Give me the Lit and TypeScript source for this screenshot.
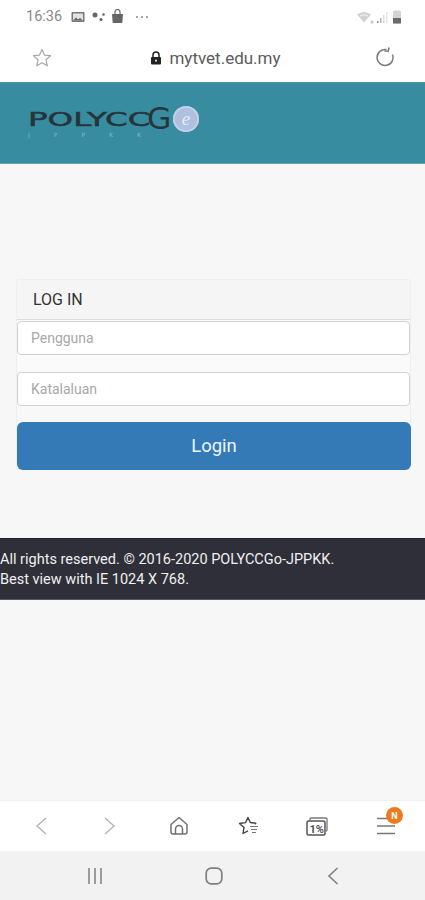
import { LitElement, html, css } from "lit";
import { customElement } from "lit/decorators.js";

@customElement("app-root")
export class AppRoot extends LitElement {
  static styles = css`
    :host { display: block; width: 425px; height: 900px; font-family: Roboto, "Liberation Sans", sans-serif; background: #f7f7f7; overflow: hidden; }
    .shell { display: flex; flex-direction: column; height: 900px; }
    svg { display: block; flex: none; }
    .status { height: 33px; background: #fff; display: flex; align-items: center; padding: 0 23px 0 26px; color: #8a8a8a; font-size: 14.5px; box-sizing: border-box; }
    .status .img { margin-left: 9px; }
    .status .nodes { margin-left: 7px; }
    .status .bag { margin-left: 6px; }
    .status .dots { margin-left: 11px; }
    .status .right { margin-left: auto; display: flex; align-items: center; gap: 2px; }
    .url { height: 49px; background: #fff; display: flex; align-items: center; justify-content: space-between; padding: 0 30px 0 32px; box-sizing: border-box; }
    .addr { display: flex; align-items: center; gap: 7px; font-size: 17px; color: #5c5c5c; margin-left: 4px; }
    .head { height: 82px; background: #388c9f; border-top: 1px solid #4a9cab; border-bottom: 1px solid #5aa7b3; box-sizing: border-box; padding: 23px 0 0 28px; display: flex; align-items: flex-start; }
    .logo { display: flex; align-items: flex-start; }
    .logo-words { display: flex; flex-direction: column; width: 144px; }
    .poly { font-family: "DejaVu Sans", sans-serif; color: #26353c; height: 26px; line-height: 26px; display: flex; align-items: center; }
    .wide { display: block; flex: none; width: 119px; font-size: 19px; white-space: nowrap; transform: scaleX(1.71); transform-origin: left center; -webkit-text-stroke: 0.5px #26353c; }
    .g { display: block; flex: none; font-size: 30px; transform: scaleX(1.05); transform-origin: left center; }
    .jppkk { font-size: 6px; line-height: 6px; color: #8fb8c2; letter-spacing: 24px; font-family: "DejaVu Sans", sans-serif; white-space: nowrap; display: flex; }
    .jppkk .last { letter-spacing: 0; }
    .badge-e { width: 26px; height: 26px; border-radius: 50%; background: #aebfe0; margin: 0 0 0 1px; display: flex; align-items: center; justify-content: center; color: #e8ecf8; font-style: italic; font-size: 19px; font-family: "Liberation Serif", serif; flex: none; box-shadow: inset 0 0 0 2px #c2cfe6; }
    .page { flex: 1; display: flex; flex-direction: column; background: #f7f7f7; padding-top: 115px; }
    .panel { margin: 0 14px 0 16px; border: 1px solid #efefef; border-radius: 3px; background: #f8f8f8; }
    .title { height: 40px; background: #f5f5f5; border-bottom: 1px solid #dcdcdc; display: flex; align-items: center; padding-left: 16px; font-size: 16px; color: #333; box-sizing: border-box; }
    .fields { display: flex; flex-direction: column; gap: 17px; padding-top: 1px; background: #fafafa; }
    .input { height: 34px; box-sizing: border-box; background: #fff; border: 1px solid #d2d2d2; border-radius: 4px; display: flex; align-items: center; padding-left: 13px; font-size: 14px; color: #a8a8a8; }
    .btn { height: 48px; margin: 16px 0 -1px 0; width: 394px; background: #337ab7; border-radius: 6px; color: #eef5f9; font-size: 18.500px; display: flex; align-items: center; justify-content: center; }
    .foot { margin-top: 68px; height: 62px; background: #2e2f38; border-top: 1px solid #1f2030; border-bottom: 1px solid #55565e; box-sizing: border-box; color: #f0f0f0; font-size: 14.500px; line-height: 20px; padding-top: 11px; }
    .toolbar { height: 51px; background: #fff; border-top: 1px solid #f0f0f0; box-sizing: border-box; display: grid; grid-template-columns: repeat(6, 1fr); padding: 0 4px 0 6px; }
    .cell { display: flex; align-items: center; justify-content: center; position: relative; }
    .n { position: absolute; top: 6px; left: 34px; width: 17px; height: 17px; border-radius: 50%; background: #ee7a1f; color: #fff; font-size: 9px; font-weight: 700; display: flex; align-items: center; justify-content: center; }
    .nav { height: 49px; background: #f2f2f2; display: grid; grid-template-columns: repeat(3, 1fr); padding: 0 33px 0 36px; box-sizing: border-box; align-items: center; justify-items: center; }
  `;

  render() {
    return html`<div class="shell">
      <div class="status">
        <span>16:36</span>
        <svg class="img" width="14" height="12" viewBox="0 0 14 12"><rect x=".5" y="1" width="13" height="10" rx="1" fill="#777"/><rect x="2" y="2.500" width="10" height="7" fill="#e2e2e2"/><path d="M2 9.500l3-3 2 2 2-1.500 3 2.500z" fill="#666"/></svg>
        <svg class="nodes" width="13" height="10" viewBox="0 0 13 10"><circle cx="3" cy="3" r="2.500" fill="#666"/><circle cx="9" cy="7.500" r="1.600" fill="#666"/><circle cx="11.500" cy="2.500" r="1.300" fill="#666"/></svg>
        <svg class="bag" width="13" height="15" viewBox="0 0 13 15"><path d="M1 5h11l-.7 9H1.700z" fill="#666"/><path d="M4 6V3a2.500 2.500 0 0 1 5 0v3" fill="none" stroke="#666" stroke-width="1.200"/></svg>
        <svg class="dots" width="14" height="4" viewBox="0 0 14 4"><circle cx="2" cy="2" r="1" fill="#888"/><circle cx="7" cy="2" r="1" fill="#888"/><circle cx="12" cy="2" r="1" fill="#888"/></svg>
        <span class="right">
          <svg width="19" height="14" viewBox="0 0 19 14"><path d="M1 4.500a11 11 0 0 1 14 0L8 12.500z" fill="#d2d2d2"/><path d="M4 6a7 7 0 0 1 8 0" fill="none" stroke="#f5f5f5"/><circle cx="16" cy="12" r="1.500" fill="#c4c4c4"/></svg>
          <svg width="12" height="14" viewBox="0 0 12 14" style="margin-left:-1px"><rect x="1" y="11" width="1.500" height="2" fill="#888"/><rect x="4" y="8" width="1.500" height="5" fill="#b4b4b4"/><rect x="7" y="5" width="1.500" height="8" fill="#ddd"/><rect x="10" y="2" width="1.500" height="11" fill="#e6e6e6"/></svg>
          <svg width="10" height="16" viewBox="0 0 10 16" style="margin-left:2px"><rect x="1" y="1.500" width="8" height="13" rx="1.500" fill="#d4d4d4"/><rect x="1" y="9" width="8" height="5.500" fill="#6a6a6a"/></svg>
        </span>
      </div>
      <div class="url">
        <svg width="20" height="20" viewBox="0 0 20 20"><path d="M10 1.500l2.500 5.600 6 .6-4.500 4.100 1.300 6L10 14.700l-5.300 3.100 1.300-6L1.500 7.700l6-.6z" fill="none" stroke="#a8a8a8" stroke-width="1.200" stroke-linejoin="round"/></svg>
        <span class="addr">
          <svg width="12" height="14" viewBox="0 0 12 14"><path d="M3 6V4a3 3 0 0 1 6 0v2" fill="none" stroke="#222" stroke-width="1.500"/><rect x="1" y="6" width="10" height="7.500" rx="1" fill="#222"/><circle cx="6" cy="9.700" r="1.100" fill="#ddd"/></svg>
          mytvet.edu.my
        </span>
        <svg width="20" height="21" viewBox="0 0 20 21"><path d="M11.500 2.600A8 8 0 1 0 17.500 7.500" fill="none" stroke="#7c7c7c" stroke-width="1.500"/><path d="M14 .5L13.300 4.300 9.500 4" fill="none" stroke="#7c7c7c" stroke-width="1.500"/></svg>
      </div>
      <div class="head">
        <div class="logo">
          <div class="logo-words">
            <div class="poly"><span class="wide">POLYCC</span><span class="g">G</span></div>
            <div class="jppkk"><span>JPPK</span><span class="last">K</span></div>
          </div>
          <div class="badge-e">e</div>
        </div>
      </div>
      <div class="page">
        <div class="panel">
          <div class="title">LOG IN</div>
          <div class="fields">
            <div class="input">Pengguna</div>
            <div class="input">Katalaluan</div>
          </div>
          <div class="btn">Login</div>
        </div>
        <div class="foot">All rights reserved. © 2016-2020 POLYCCGo-JPPKK.<br />Best view with IE 1024 X 768.</div>
      </div>
      <div class="toolbar">
        <div class="cell"><svg width="14" height="20" viewBox="0 0 14 20"><path d="M12 2L3 10l9 8" fill="none" stroke="#b4b4b4" stroke-width="1.400"/></svg></div>
        <div class="cell"><svg width="14" height="20" viewBox="0 0 14 20"><path d="M2 2l9 8-9 8" fill="none" stroke="#b4b4b4" stroke-width="1.400"/></svg></div>
        <div class="cell"><svg width="20" height="20" viewBox="0 0 20 20"><path d="M10 1.500L2 8.500V16a2 2 0 0 0 2 2h12a2 2 0 0 0 2-2V8.500z" fill="none" stroke="#707070" stroke-width="1.500" stroke-linejoin="round"/><path d="M6.500 18v-5a3.500 3.500 0 0 1 7 0v5" fill="none" stroke="#707070" stroke-width="1.500"/></svg></div>
        <div class="cell"><svg width="21" height="20" viewBox="0 0 21 20"><path d="M17 8.200l.8-.9-5.500-.8L10 1.500 7.500 6.600 1.500 7.500 6 11.600 5 17.500l5-2.600" fill="none" stroke="#444" stroke-width="1.400" stroke-linejoin="round"/><path d="M12 10.500h8M13 13.500h6M14 16.500h4" stroke="#777" stroke-width="1.200"/></svg></div>
        <div class="cell"><svg width="22" height="19" viewBox="0 0 22 19"><path d="M4 3.500V2a1 1 0 0 1 1-1h15a1 1 0 0 1 1 1v11a1 1 0 0 1-1 1" fill="none" stroke="#777" stroke-width="1.300"/><rect x="1" y="4" width="18" height="14" rx="1.500" fill="#fff" stroke="#555" stroke-width="1.500"/><text x="3.500" y="15.500" font-size="11" font-weight="700" fill="#555" font-family="Roboto, sans-serif">1%</text></svg></div>
        <div class="cell"><svg width="18" height="18" viewBox="0 0 18 18"><path d="M0 1.500h18M0 9h18M0 16.500h18" stroke="#777" stroke-width="1.500"/></svg><span class="n">N</span></div>
      </div>
      <div class="nav">
        <svg width="16" height="16" viewBox="0 0 16 16"><path d="M2 0v16M8 0v16M14 0v16" stroke="#808080" stroke-width="1.500"/></svg>
        <svg width="18" height="18" viewBox="0 0 18 18"><rect x="1.200" y="1.200" width="15.600" height="15.600" rx="5" fill="none" stroke="#808080" stroke-width="1.700"/></svg>
        <svg width="12" height="18" viewBox="0 0 12 18"><path d="M10.500 1L2 9l8.500 8" fill="none" stroke="#808080" stroke-width="1.600"/></svg>
      </div>
    </div>`;
  }
}
